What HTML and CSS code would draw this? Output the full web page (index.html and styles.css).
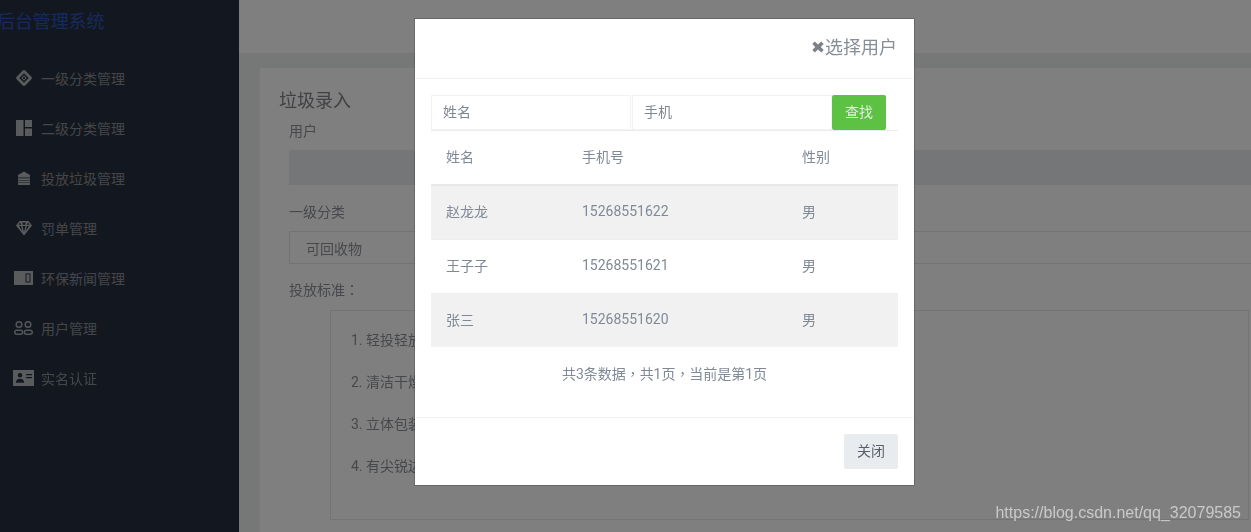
FILE: index.html
```html
<!DOCTYPE html>
<html lang="zh-CN">
<head>
<meta charset="utf-8">
<title>后台管理系统</title>
<link rel="stylesheet" href="styles.css">
</head>
<body>
<div class="app">
  <aside class="sidebar">
    <div class="brand">后台管理系统</div>
    <nav class="nav">
      <a class="nav-item">
        <svg class="ico" viewBox="0 0 16 16"><path fill-rule="evenodd" d="M6.800.6a1.800 1.800 0 0 1 2.400 0l5.900 5.900a2 2 0 0 1 0 3l-5.900 5.900a1.800 1.800 0 0 1-2.400 0L.9 9.500a2 2 0 0 1 0-3ZM8 3.300 3.300 8 8 12.700 12.700 8Zm0 2L10.700 8 8 10.700 5.300 8Zm0 1.300L6.600 8 8 9.400 9.400 8Z"/></svg>
        <span>一级分类管理</span>
      </a>
      <a class="nav-item">
        <svg class="ico" viewBox="0 0 16 16"><path d="M0 0h7.500v16H0ZM9 0h7v7H9ZM9 8.500h7V16H9Z"/></svg>
        <span>二级分类管理</span>
      </a>
      <a class="nav-item">
        <svg class="ico" viewBox="0 0 16 16"><path d="M8 1.500 14 5v2.600H2V5ZM2 8.200h12v1.700H2ZM2 10.400h12v1.700H2ZM2 12.600h12V15H2Z"/></svg>
        <span>投放垃圾管理</span>
      </a>
      <a class="nav-item">
        <svg class="ico" viewBox="0 0 16 16"><path fill-rule="evenodd" d="M3.500 1h9L16 5.500 8 15.500 0 5.500ZM3 6l3.200 5.300L5.200 6Zm3.500 0L8 12l1.500-6Zm4.300 0-1 5.300L13 6ZM4 2.500 2.300 4.800h3Zm2.500 0 .1 2.300h2.800l.1-2.300ZM12 2.500l-1.300 2.300h3Z"/></svg>
        <span>罚单管理</span>
      </a>
      <a class="nav-item">
        <svg class="ico wide" viewBox="0 0 19 16"><path fill-rule="evenodd" d="M0 1h19v14H0Zm11.500 2.500v9h5v-9ZM12.500 4.500h3v7h-3Z"/></svg>
        <span>环保新闻管理</span>
      </a>
      <a class="nav-item">
        <svg class="ico wide outline" viewBox="0 0 19 16"><circle cx="5" cy="4.500" r="2.800"/><circle cx="14" cy="4.500" r="2.800"/><rect x=".8" y="10.300" width="7.800" height="4" rx="2"/><rect x="10.400" y="10.300" width="7.800" height="4" rx="2"/></svg>
        <span>用户管理</span>
      </a>
      <a class="nav-item">
        <svg class="ico card-ico" viewBox="0 0 21 16"><path fill-rule="evenodd" d="M0 0h21v16H0Zm7 3a2.300 2.300 0 1 0 0 4.600A2.300 2.300 0 0 0 7 3ZM2.800 12.800h8.400c0-2.500-1.800-4-4.200-4s-4.200 1.500-4.200 4ZM13 4v1.300h6V4Zm0 3v1.300h6V7Z"/></svg>
        <span>实名认证</span>
      </a>
    </nav>
  </aside>

  <main class="main">
    <header class="topbar"></header>
    <section class="card">
      <h2 class="card-title">垃圾录入</h2>
      <form class="form">
        <label class="label">用户</label>
        <div class="readonly"></div>
        <label class="label label-gap">一级分类</label>
        <div class="select">可回收物</div>
        <label class="label label-std">投放标准<span class="tc" lang="zh-TW">：</span></label>
        <div class="standards">
          <p>1. 轻投轻放</p>
          <p>2. 清洁干燥</p>
          <p>3. 立体包装</p>
          <p>4. 有尖锐边角</p>
        </div>
      </form>
    </section>
  </main>
</div>

<div class="backdrop"></div>

<div class="modal">
  <div class="modal-head">
    <svg class="close-x" viewBox="0 0 12 12"><path d="M2.800.5 6 3.400 9.200.5l2.500 2.500L8.800 6l2.900 3-2.500 2.500L6 8.600l-3.200 2.900L.3 9l2.900-3L.3 3Z"/></svg>
    <span class="modal-title">选择用户</span>
  </div>
  <div class="modal-body">
    <div class="search">
      <div class="field">姓名</div>
      <div class="field">手机</div>
      <div class="search-btn">查找</div>
    </div>
    <table class="table">
      <thead>
        <tr><th class="c1">姓名</th><th class="c2">手机号</th><th>性别</th></tr>
      </thead>
      <tbody>
        <tr class="odd"><td>赵龙龙</td><td>15268551622</td><td>男</td></tr>
        <tr><td>王子子</td><td>15268551621</td><td>男</td></tr>
        <tr class="odd"><td>张三</td><td>15268551620</td><td>男</td></tr>
      </tbody>
    </table>
    <p class="pager">共3条数据<span class="tc" lang="zh-TW">，</span>共1页<span class="tc" lang="zh-TW">，</span>当前是第1页</p>
  </div>
  <div class="modal-foot">
    <div class="close-btn">关闭</div>
  </div>
</div>

<div class="watermark">https://blog.csdn.net/qq_32079585</div>
</body>
</html>
```
FILE: styles.css
```css
* { box-sizing: border-box; }
html, body { margin: 0; height: 100%; overflow: hidden; }
body {
  font-family: Roboto, "Noto Sans CJK SC", sans-serif;
  font-size: 14px;
  color: #6b7480;
  background: #edeeee;
}
.tc { font-family: "Noto Sans CJK TC", sans-serif; }
.app { display: flex; height: 532px; width: 1251px; overflow: hidden; filter: blur(.5px); }

.sidebar { width: 239px; flex: none; background: #263140; }
.brand {
  height: 43px;
  line-height: 43px;
  margin-left: -3px;
  font-size: 18px;
  letter-spacing: -.1px;
  color: #2c55b8;
  white-space: nowrap;
}
.nav { display: flex; flex-direction: column; padding-top: 10px; }
.nav-item {
  display: flex;
  align-items: center;
  height: 50px;
  padding-left: 16px;
  color: #888c92;
  white-space: nowrap;
}
.nav-item span { margin-left: 9px; }
.ico { width: 16px; height: 16px; flex: none; fill: #b5b7ba; }
.ico.wide { width: 19px; margin-left: -2px; margin-right: -1px; }
.ico.outline { fill: none; stroke: #a8abae; stroke-width: 1.500; }
.card-ico { width: 21px; margin-left: -3px; margin-right: -2px; }

.main { flex: 1; min-width: 0; }
.topbar { height: 53px; background: #fff; }
.card {
  margin: 15px -20px 0 20px;
  height: 470px;
  padding: 20px 0 0 19px;
  background: #fff;
  border-left: 1px solid #f2f2f2;
}
.card-title {
  margin: 0;
  font-size: 18px;
  font-weight: 400;
  line-height: 26px;
  color: #808388;
}
.form { padding-left: 10px; }
.label { display: block; line-height: 20px; color: #8c9096; }
.form > .label:first-child { margin-top: 7px; }
.readonly { height: 35px; margin-top: 9px; background: #e9ecef; }
.label-gap { margin-top: 17px; }
.select {
  height: 33px;
  margin-top: 9px;
  padding-left: 16px;
  line-height: 35px;
  border: 1px solid #e6e6e6;
  color: #8c9096;
}
.label-std { margin-top: 15px; }
.standards {
  height: 210px;
  margin: 10px 0 0 41px;
  width: 919px;
  padding: 19px 0 0 20px;
  border: 1px solid #e8e8e8;
}
.standards p { margin: 0 0 22px; line-height: 20px; color: #8c9096; }

.backdrop { position: fixed; inset: 0; background: rgba(0, 0, 0, .5); }

.modal {
  position: fixed;
  left: 415px;
  top: 19px;
  width: 499px;
  height: 466px;
  display: flex;
  flex-direction: column;
  background: #fff;
  border: 1px solid #fff;
  box-shadow: 0 0 0 1px rgba(50, 50, 50, .3);
  filter: blur(.35px);
}
.modal-head {
  display: flex;
  align-items: center;
  justify-content: flex-end;
  height: 59px;
  padding: 0 16px 2px 0;
  border-bottom: 1px solid #eef0f1;
}
.close-x { width: 12px; height: 12px; margin: 0 1px 3px 0; fill: #7d8288; }
.modal-title { font-size: 18px; color: #868e96; line-height: 24px; }
.modal-body { flex: 1; padding: 16px 15px 0; }
.search { display: flex; height: 36px; border-bottom: 1px solid #e9ecef; }
.field {
  width: 200px;
  height: 35px;
  margin-right: 1px;
  padding-left: 11px;
  line-height: 33px;
  border: 1px solid #f1f2f3;
  color: #7f8790;
}
.search-btn {
  width: 54px;
  height: 35px;
  margin-left: -1px;
  text-align: center;
  line-height: 34px;
  background: #5dc144;
  color: #def0d8;
  border-radius: 2px;
}
.table { width: 100%; border-collapse: collapse; table-layout: fixed; color: #7f8a96; }
.table th {
  height: 54px;
  padding: 0 15px 4px;
  text-align: left;
  font-weight: 400;
  border-bottom: 2px solid #e6e8ea;
}
.c1 { width: 136px; }
.c2 { width: 220px; }
.table td { height: 54px; padding: 0 15px 2px; border-bottom: 1px solid #eceeef; }
.table tr:last-child td { border-bottom: 0; }
.odd { background: #f1f1f2; }
.pager { margin: 16px 0 0; text-align: center; line-height: 20px; color: #7f8a96; letter-spacing: -.05px; }
.modal-foot {
  display: flex;
  justify-content: flex-end;
  height: 67px;
  padding: 16px 15px 0;
  border-top: 1px solid #f0f1f2;
}
.close-btn {
  width: 54px;
  height: 35px;
  text-align: center;
  line-height: 35px;
  background: #e9ecef;
  color: #59606a;
  border-radius: 2px;
}

.watermark {
  position: fixed;
  right: 10px;
  bottom: 9px;
  font-family: "Liberation Sans", sans-serif;
  font-size: 16px;
  line-height: 20px;
  color: #c9c9c9;
}
```
